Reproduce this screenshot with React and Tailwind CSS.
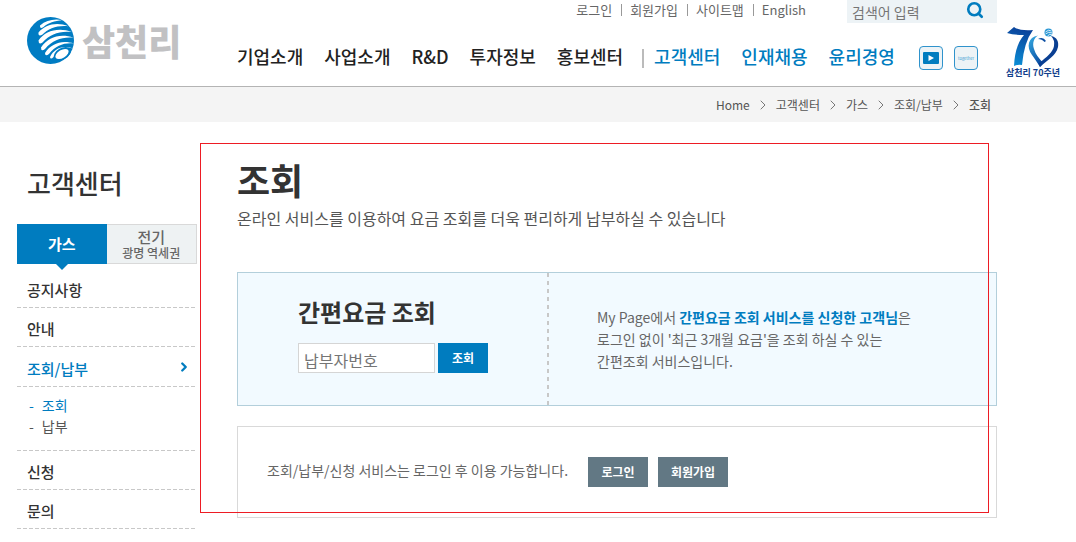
import { ChevronRight, Search } from "lucide-react";

const mainMenu = ["기업소개", "사업소개", "R&D", "투자정보", "홍보센터"];
const subMenu = ["고객센터", "인재채용", "윤리경영"];
const utilityLinks = ["로그인", "회원가입", "사이트맵", "English"];
const trail = ["Home", "고객센터", "가스", "조회/납부", "조회"];

function GlobeMark() {
  return (
    <svg viewBox="0 0 47 47" className="size-[47px] shrink-0" aria-hidden="true">
      <circle cx="23.5" cy="23.5" r="23.5" fill="#007cc3" />
      <g fill="#fff">
        <path d="M13 8.500C19 3.500 27 1.500 35 3.200C28 3.500 21 6 16.500 10Q12.500 12.500 13 8.500Z" />
        <path d="M11.500 15.500C18 8 29 4.500 41.500 9.300C31 8 21 11.500 15.500 17.500Q11 20 11.500 15.500Z" />
        <path d="M11.500 23.500C18 14 31 10 45 15C33 13.500 23 17 15.500 25.500Q11.500 28 11.500 23.500Z" />
        <path d="M14 30.500C21 20.500 33 16 46.500 20.800C35 19.800 26 23 18 32Q14 35 14 30.500Z" />
        <path d="M18 36C24 26.500 35 22.500 47 26.500C37 25.500 29 28.500 22 37Q18 40 18 36Z" />
        <path d="M23 40C27 31.500 36 27.500 45.800 31.500C37 30 31 33 26.500 40Q23.500 43 23 40Z" />
      </g>
      <ellipse cx="35.300" cy="36.800" rx="9.300" ry="5.800" transform="rotate(-30 35.300 36.800)" fill="#007cc3" />
      <ellipse cx="35" cy="37" rx="7.300" ry="4" transform="rotate(-30 35 37)" fill="#fff" />
    </svg>
  );
}

function AnniversaryMark() {
  return (
    <svg viewBox="0 0 52 40" className="h-10 w-[52px]" aria-hidden="true">
      <defs>
        <linearGradient id="seven" x1="0.500" y1="0" x2="0.300" y2="1">
          <stop offset="0" stopColor="#0a4099" />
          <stop offset="1" stopColor="#0b8fd6" />
        </linearGradient>
        <linearGradient id="lobe" x1="0" y1="0" x2="0.500" y2="1">
          <stop offset="0" stopColor="#37aee4" />
          <stop offset="1" stopColor="#0a4da2" />
        </linearGradient>
      </defs>
      <path d="M0 6L7 0Q12 4 26 3Q17 15 15 38Q11 37 7 39Q8 18 17 8Q7 8 0 6Z" fill="url(#seven)" />
      <path d="M31 8.500C21 10 19 20 25 28Q28 32 33 40L36.500 36Q29 29 27 22C25 16 27 11 31 8.500Z" fill="url(#lobe)" />
      <path d="M44 9C50 10 52 15 51 20C49 29 40 33 33 40L31.500 36.500C40 30 46 25 47 19Q48 13 44 9Z" fill="#0a3f92" />
      <path d="M31 12Q36 9 39 14L37.500 15Q35 12 31 12Z" fill="#0a4da2" />
      <circle cx="41.500" cy="5.500" r="4" fill="#2b98d5" />
      <path d="M38.500 5Q41.500 2 44.500 4M38.500 7Q41.500 4 45.500 6M40.500 9Q42.500 6 45.500 8" stroke="#fff" strokeWidth="0.800" fill="none" />
    </svg>
  );
}

function Header() {
  return (
    <header className="flex h-[87px] items-start border-b border-[#b4b4b4] pr-[17px] pl-[27px]">
      <a href="#home" className="mt-[17px] flex w-[210px] shrink-0 items-center gap-2">
        <GlobeMark />
        <span className="text-[36px] leading-[47px] font-black text-[#c1c1c3]">삼천리</span>
      </a>
      <div className="flex min-w-0 flex-1 flex-col">
        <div className="flex h-[23px] items-center justify-end">
          <nav aria-label="유틸리티" className="mr-[41px] flex items-center pb-1 text-[13px] text-[#666]">
            {utilityLinks.map((name, i) => (
              <a
                key={name}
                href="#"
                className={i ? "ml-[9px] flex items-center gap-2 before:h-3 before:w-px before:bg-[#999]" : ""}
              >
                {name}
              </a>
            ))}
          </nav>
          <form className="flex h-[23px] w-[150px] items-center bg-[#edf3f6] pr-[13px] pl-[5px]">
            <input
              aria-label="검색어"
              placeholder="검색어 입력"
              className="min-w-0 flex-1 text-sm outline-none placeholder:text-[#757575]"
            />
            <button type="button" aria-label="검색" className="pb-1 text-[#007cbf]">
              <Search className="size-[18px]" strokeWidth={3.5} />
            </button>
          </form>
        </div>
        <div className="mt-[19px] flex h-8 items-center text-[18px] whitespace-nowrap">
          <nav aria-label="주 메뉴" className="flex items-center gap-[21px] pb-1 font-medium text-[#222]">
            {mainMenu.map((name) => (
              <a key={name} href="#">{name}</a>
            ))}
          </nav>
          <span className="mr-[10px] ml-[19px] h-[19px] w-0.5 bg-[#bbb]" />
          <nav aria-label="고객 메뉴" className="flex items-center gap-[21px] pb-1 font-medium text-[#007cbf]">
            {subMenu.map((name) => (
              <a key={name} href="#">{name}</a>
            ))}
          </nav>
          <div className="ml-auto flex gap-[11px] pr-[19px]">
            <a href="#" aria-label="유튜브" className="flex size-6 items-center justify-center rounded-[4px] border border-[#2f93cc] bg-[#edf3f6]">
              <svg viewBox="0 0 16 12" className="h-3 w-4" aria-hidden="true">
                <rect width="16" height="12" rx="1" fill="#007cbf" />
                <path d="M5.500 3L11 6L5.500 9Z" fill="#fff" />
              </svg>
            </a>
            <a href="#" className="flex size-6 items-center justify-center rounded-[4px] border border-[#2f93cc] bg-[#edf3f6] text-[4px] text-[#3a9fd4]">
              together
            </a>
          </div>
        </div>
      </div>
      <a href="#" className="mt-[27px] ml-[10px] flex w-[52px] shrink-0 flex-col items-center">
        <AnniversaryMark />
        <span className="text-[9px] leading-3 font-bold whitespace-nowrap text-[#12408c]">삼천리 70주년</span>
      </a>
    </header>
  );
}

function Breadcrumb() {
  return (
    <nav aria-label="현재 위치" className="flex h-[35px] items-center justify-end bg-[#f4f4f4] pr-[85px] text-xs text-[#555]">
      {trail.map((name, i) => (
        <span key={name + i} className="flex items-center last:font-medium">
          {i > 0 && <ChevronRight className="mx-[5px] size-4 text-[#777]" strokeWidth={1.5} />}
          <a href="#">{name}</a>
        </span>
      ))}
    </nav>
  );
}

function DashRule() {
  return <div className="h-px w-[178px] bg-[repeating-linear-gradient(90deg,#c8c8c8_0_4px,transparent_4px_6px)]" />;
}

function SideItem({ name, active }) {
  return (
    <li>
      <a
        href="#"
        className={
          "flex items-center justify-between pt-[5px] pr-[6px] pl-[10px] text-[15px] font-medium " +
          (active ? "h-[39px] text-[#007cbf]" : "h-[38px] text-[#333]")
        }
      >
        {name}
        {active && <ChevronRight className="mb-1 size-3.5" strokeWidth={4} />}
      </a>
      <DashRule />
    </li>
  );
}

function Sidebar() {
  return (
    <aside className="w-[180px] shrink-0">
      <h2 className="mt-[41px] pl-[10px] text-[26px] leading-10 font-medium text-[#333]">고객센터</h2>
      <div className="mt-[21px] flex h-10">
        <button className="relative flex-1 bg-[#007cbf] text-[15px] font-bold text-white">
          가스
          <span className="absolute top-full left-1/2 -translate-x-1/2 border-x-[6px] border-t-[6px] border-x-transparent border-t-[#007cbf]" />
        </button>
        <button className="flex flex-1 flex-col items-center justify-center border border-l-0 border-[#d9d9d9] bg-[#eef2f3] font-medium text-[#666]">
          <span className="text-[15px] leading-[17px]">전기</span>
          <span className="text-xs leading-4">광명 역세권</span>
        </button>
      </div>
      <ul className="mt-[5px]">
        <SideItem name="공지사항" />
        <SideItem name="안내" />
        <SideItem name="조회/납부" active />
        <li>
          <ul className="flex h-[63px] flex-col pt-2 pl-3 text-sm leading-[21px] text-[#555]">
            <li><a href="#" className="flex gap-2 text-[#007cbf]"><span>-</span>조회</a></li>
            <li><a href="#" className="flex gap-2"><span>-</span>납부</a></li>
          </ul>
          <DashRule />
        </li>
        <SideItem name="신청" />
        <SideItem name="문의" />
      </ul>
    </aside>
  );
}

function Content() {
  return (
    <main className="relative ml-10 min-w-0 flex-1">
      <h1 className="mt-[35px] text-[36px] leading-[44px] font-bold text-[#333]">조회</h1>
      <p className="mt-[5px] text-base leading-6 text-[#555]">
        온라인 서비스를 이용하여 요금 조회를 더욱 편리하게 납부하실 수 있습니다
      </p>
      <section className="mt-[42px] flex h-[134px] border border-[#b3cfdb] bg-[#f2faff]">
        <form className="w-[309px] shrink-0 pt-[21px] pl-[60px]">
          <h3 className="text-[24px] leading-9 font-bold text-[#333]">
            <label htmlFor="payer">간편요금 조회</label>
          </h3>
          <div className="mt-[13px] flex gap-[3px]">
            <input
              id="payer"
              placeholder="납부자번호"
              className="h-[30px] w-[137px] border border-[#d5d5d5] bg-white pt-1 pl-[5px] text-base outline-none placeholder:text-[#757575]"
            />
            <button type="button" className="h-[30px] w-[50px] bg-[#007cbf] text-xs font-bold text-white">조회</button>
          </div>
        </form>
        <div className="w-0.5 shrink-0 bg-[repeating-linear-gradient(180deg,#c8c8c8_0_4px,transparent_4px_8px)]" />
        <p className="pt-[33px] pl-12 text-sm leading-[22px] text-[#666]">
          My Page에서 <strong className="text-[#007cbf]">간편요금 조회 서비스를 신청한 고객님</strong>은
          <br />
          로그인 없이 '최근 3개월 요금'을 조회 하실 수 있는
          <br />
          간편조회 서비스입니다.
        </p>
      </section>
      <section className="mt-5 flex h-[92px] items-center gap-[10px] border border-[#d9d9d9] pl-[29px]">
        <p className="min-w-[311px] pb-1 text-sm text-[#666]">조회/납부/신청 서비스는 로그인 후 이용 가능합니다.</p>
        <a href="#" className="flex h-[30px] w-[60px] items-center justify-center bg-[#627884] text-xs font-bold text-white">로그인</a>
        <a href="#" className="flex h-[30px] w-[70px] items-center justify-center bg-[#627884] text-xs font-bold text-white">회원가입</a>
      </section>
      <div className="pointer-events-none absolute top-[21px] right-2 bottom-4 -left-[37px] border border-[#ed1c24]" />
    </main>
  );
}

export default function App() {
  return (
    <div className="min-h-screen bg-white font-['Noto_Sans_CJK_KR',sans-serif]">
      <Header />
      <Breadcrumb />
      <div className="flex pr-[79px] pl-[17px]">
        <Sidebar />
        <Content />
      </div>
    </div>
  );
}
